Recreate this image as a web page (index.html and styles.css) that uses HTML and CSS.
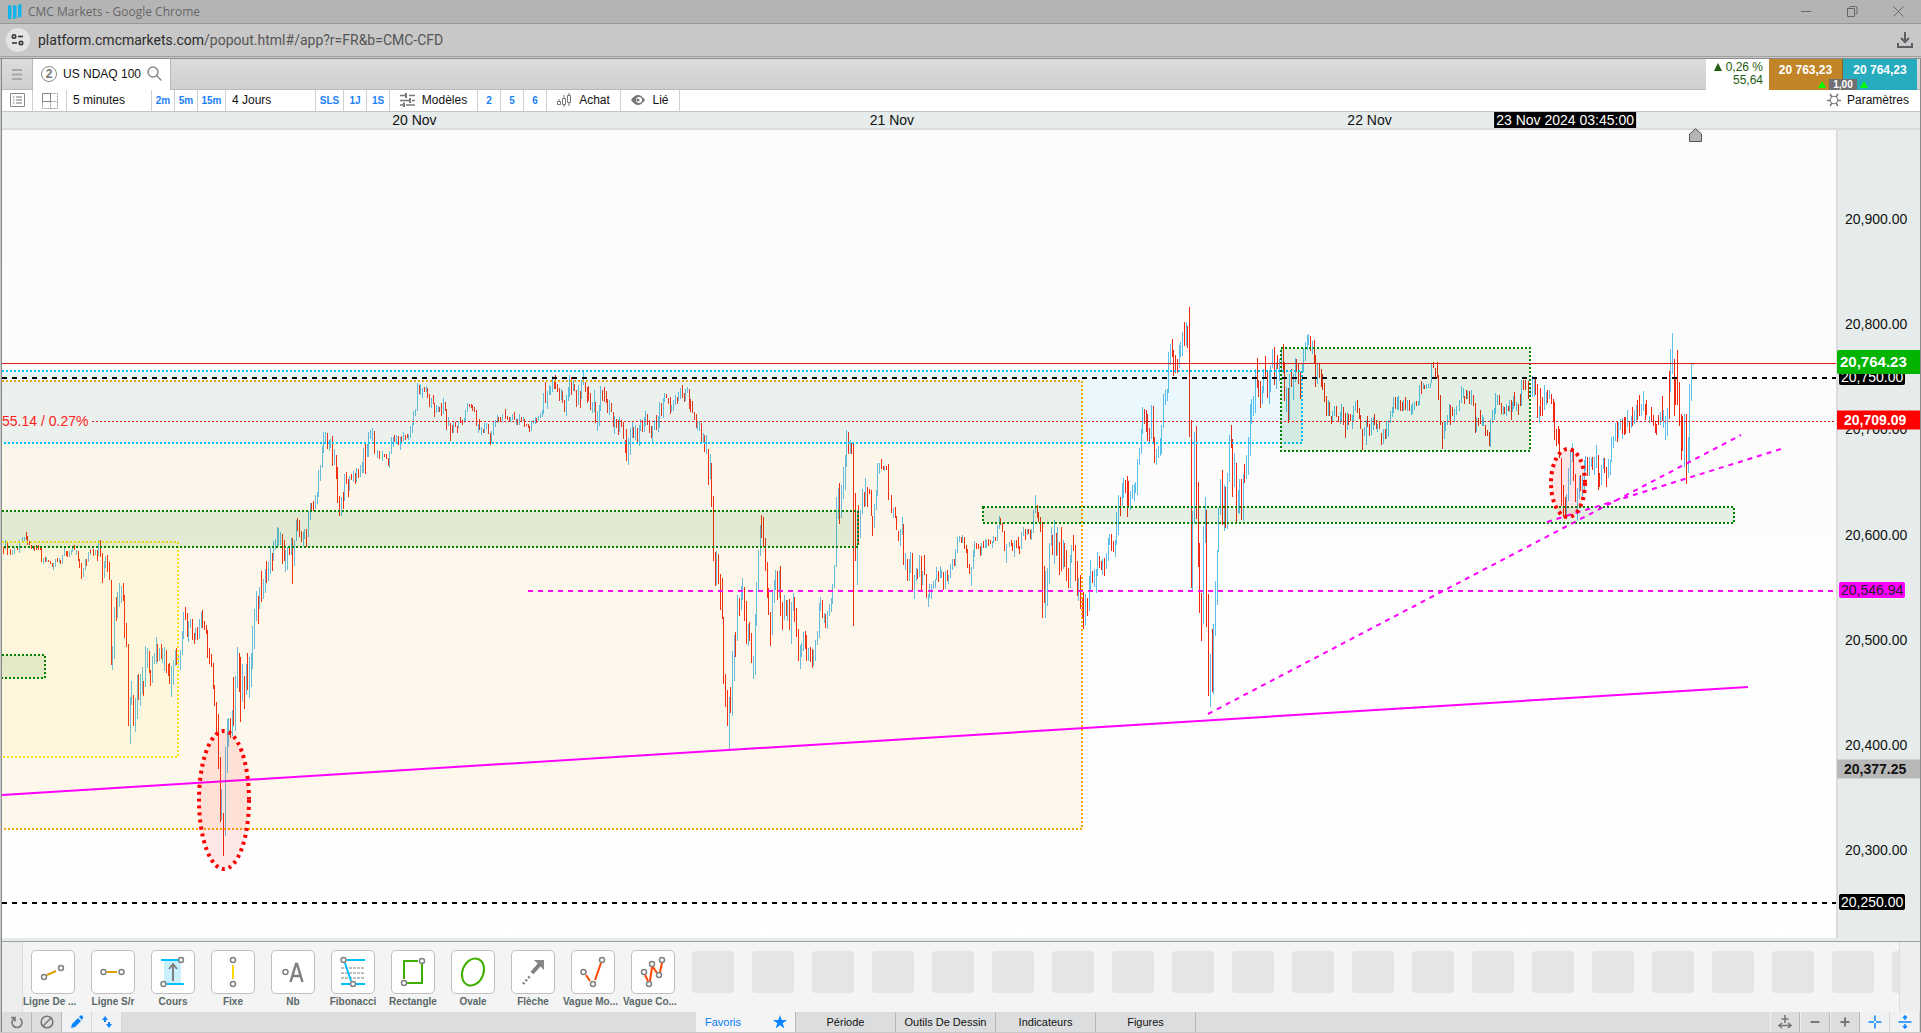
FILE: index.html
```html
<!DOCTYPE html>
<html lang="fr">
  <head>
    <meta charset="utf-8" />
    <title>CMC Markets</title>
    <link rel="stylesheet" href="styles.css">
  </head>

  <body>

    <!-- Browser window -->
    <header class="titlebar">
      <svg class="logo" width="14" height="15" viewBox="0 0 14 15"><path d="M0 1l3.500 .8V15H0zM5 1l3.500 .8V14L5 15zM10 .8L13.500 0v12.500L10 14z" fill="#12b5ea"/></svg>
      <span class="window-title">CMC Markets - Google Chrome</span>
      <button class="window-btn" aria-label="Minimize"><svg width="11" height="11"><path d="M0 5.500h10" stroke="#666" fill="none"/></svg></button>
      <button class="window-btn" aria-label="Restore"><svg width="11" height="11"><path d="M.5 2.500h7v8h-7zM2.500 2.500v-1q0-1 1-1h5q1.500 0 1.500 1.500v5q0 1-1.500 1" stroke="#666" fill="none"/></svg></button>
      <button class="window-btn" aria-label="Close"><svg width="11" height="11"><path d="M.5.5l10 10M10.500.5l-10 10" stroke="#666" fill="none"/></svg></button>
    </header>
    <div class="urlbar">
      <button class="site-info" aria-label="Site information"><svg width="14" height="12" viewBox="0 0 14 12" fill="none" stroke="#333" stroke-width="1.600"><circle cx="3" cy="2.500" r="1.700"/><path d="M7 2.500h5"/><path d="M1 9h5"/><circle cx="10" cy="9" r="1.700"/></svg></button>
      <div class="url">platform.cmcmarkets.com<span>/popout.html#/app?r=FR&amp;b=CMC-CFD</span></div>
      <button class="download" aria-label="Downloads"><svg width="16" height="16" viewBox="0 0 16 16" fill="none" stroke="#5b5e62" stroke-width="2"><path d="M8 0v9M4 6l4 4 4-4M1 11v4h14v-4"/></svg></button>
    </div>

    <main class="app">

      <!-- Instrument tab and prices -->
      <div class="tabs">
        <button class="menu" aria-label="Menu"><svg width="10" height="11"><path d="M0 1h10M0 5.500h10M0 10h10" stroke="#a8a8a8" stroke-width="2"/></svg></button>
        <button class="tab">
          <span class="tab-number">2</span>
          US NDAQ 100
          <svg width="15" height="15" fill="none" stroke="#888" stroke-width="1.500"><circle cx="6" cy="6" r="5"/><path d="M9.500 9.500l5 5"/></svg>
        </button>
        <div class="change">
          <div><svg width="8" height="8"><path d="M4 0l4 8H0z" fill="#1e5c10"/></svg> 0,26 %</div>
          <div>55,64</div>
        </div>
        <div class="prices">
          <button class="sell">20 763,23</button>
          <button class="buy">20 764,23</button>
          <div class="spread">
            <svg width="8" height="7"><path d="M4 0l4 7H0z" fill="#0f0"/></svg>
            <span>1,00</span>
            <svg width="8" height="7"><path d="M4 0l4 7H0z" fill="#0f0"/></svg>
          </div>
        </div>
      </div>

      <!-- Chart toolbar -->
      <div class="toolbar">
        <button class="cell icon-cell" aria-label="Liste"><svg width="15" height="15" fill="none" stroke="#888"><path d="M.5.5h14v13H.5z"/><path d="M3 4h1.500M6 4h6M3 7h1.500M6 7h6M3 10h1.500M6 10h6" stroke="#777"/></svg></button>
        <button class="cell icon-cell wide" aria-label="Disposition"><svg width="16" height="16" fill="none" stroke="#999"><path d="M8.500 .5h7v15H.5v-7M8.500 8.500v7M8.500 8.500h7" stroke-dasharray="2 1"/><path d="M.5.5h8v8h-8z" stroke="#888"/></svg></button>
        <select class="cell period" aria-label="Intervalle"><option>5 minutes</option></select>
        <button class="cell short">2m</button>
        <button class="cell short">5m</button>
        <button class="cell short long">15m</button>
        <select class="cell range" aria-label="Durée"><option>4 Jours</option></select>
        <button class="cell short long">SLS</button>
        <button class="cell short">1J</button>
        <button class="cell short">1S</button>
        <button class="cell models"><svg width="15" height="14" fill="none" stroke="#777"><path d="M0 2.500h6M9 2.500h6M0 7.500h9M12 7.500h3M0 12h3M6 12h9" stroke-width="1.500"/><path d="M6 0v5M10 5v5M4 9.500v4.500" stroke-width="2"/></svg> Modèles</button>
        <button class="cell short">2</button>
        <button class="cell short">5</button>
        <button class="cell short">6</button>
        <button class="cell orders"><svg width="15" height="14" fill="none" stroke="#777"><path d="M.5 8.500h3v3h-3zM5.500 5.500h3v6h-3zM10.500 2.500h3v7h-3zM2 6v2M7 2v3M7 12v2M12 0v2M12 10v3"/></svg> Achat</button>
        <button class="cell linked"><svg width="14" height="10"><path d="M0 5Q7-5 14 5Q7 15 0 5z" fill="#777"/><circle cx="8" cy="5" r="3" fill="#fff"/><circle cx="7" cy="5" r="1.500" fill="#777"/></svg> Lié</button>
        <button class="settings"><svg width="14" height="14" fill="none" stroke="#777"><circle cx="7" cy="7" r="3.800"/><path d="M0 7.500h3M11 7.500h3M3 1l2 3M11 1L9 4M3 13l2-3M11 13l-2-3" stroke-width="1.500"/></svg> Paramètres</button>
      </div>

      <!-- Chart -->
      <div class="time-axis" id="time-axis"></div>
      <div class="chart">
        <div class="plot">
          <svg class="drawing" viewBox="2 130 1834 808" preserveAspectRatio="none">
            <path id="up" class="up"/>
            <path id="down" class="down"/>

            <rect class="zone orange" x="-10" y="381" width="1092" height="448"/>
            <rect class="zone blue" x="-10" y="371" width="1312" height="72"/>
            <rect class="zone yellow" x="-10" y="542" width="188" height="215"/>
            <rect class="zone green" x="-10" y="511" width="868" height="36"/>
            <rect class="zone green" x="-10" y="655" width="55" height="23"/>
            <rect class="zone green" x="983" y="507" width="751" height="16"/>
            <rect class="zone green" x="1281" y="348" width="249" height="103"/>

            <path class="level black" d="M2 378H1836M2 903H1836"/>
            <path class="last" d="M2 363.500H1836"/>
            <path class="previous" d="M92 421.500H1836"/>
            <path class="level magenta" d="M528 591H1836"/>
            <path class="trend" d="M2 795L1748 687"/>
            <path class="trend dashed" d="M1208 714L1741 435M1547 522L1781 449"/>

            <ellipse class="circled" cx="224" cy="800" rx="25" ry="69"/>
            <ellipse class="circled" cx="1568" cy="483" rx="17" ry="34"/>
          </svg>
          <span class="variation">55.14 / 0.27%</span>
          <svg class="marker" width="13" height="14"><path d="M.5 13.500V6L6.500.7 12.500 6v7.500z" fill="#b4b4b4" stroke="#555"/></svg>
        </div>
        <div class="price-axis" id="price-axis"></div>
      </div>

      <!-- Drawing tools -->
      <div class="tools">
        <div class="tools-edge"></div>
        <div class="tools-list">
          <button class="tool"><svg viewBox="1 8 42 42"><path d="M16 32l9-4" class="gold"/><circle cx="13" cy="34" r="2.500"/><circle cx="30" cy="25" r="2.500"/></svg><span class="cut">Ligne De ...</span></button>
          <button class="tool"><svg viewBox="1 8 42 42"><path d="M16 29h10" class="gold"/><circle cx="12.500" cy="29" r="2.500"/><circle cx="30.500" cy="29" r="2.500"/></svg><span>Ligne S/r</span></button>
          <button class="tool"><svg viewBox="1 8 42 42"><path d="M13 17h17v24H13z" fill="#c8f0ff" stroke="none"/><path d="M10 17h17M16 41h17" class="cyan"/><path d="M22 38V22M18 26l4-5 4 5" stroke-width="2"/><circle cx="30" cy="17" r="2.500"/><circle cx="12.500" cy="41" r="2.500"/></svg><span>Cours</span></button>
          <button class="tool"><svg viewBox="1 8 42 42"><path d="M22 22v14" class="yellow-line"/><circle cx="22" cy="17" r="2.500"/><circle cx="22" cy="41" r="2.500"/></svg><span>Fixe</span></button>
          <button class="tool"><svg viewBox="1 8 42 42"><circle cx="14.500" cy="29" r="2.500"/><path d="M19.500 39l5.500-18h1l5.500 18M21 33h9" stroke-width="2.500"/></svg><span>Nb</span></button>
          <button class="tool"><svg viewBox="1 8 42 42"><path d="M10 25h24M10 30h24M10 35h24" stroke-width="1" stroke-dasharray="3 1"/><path d="M16 17h18M10 41h9M25 41h9M14 20l6 18" class="cyan"/><circle cx="12.500" cy="17" r="2.500"/><circle cx="22" cy="41" r="2.500"/></svg><span>Fibonacci</span></button>
          <button class="tool"><svg viewBox="1 8 42 42"><path d="M27 18H13v18M16 40h15V21" class="green-line"/><circle cx="31" cy="18" r="2.500"/><circle cx="13" cy="40" r="2.500"/></svg><span>Rectangle</span></button>
          <button class="tool"><svg viewBox="1 8 42 42"><ellipse cx="22" cy="29" rx="10.500" ry="14" transform="rotate(22 22 29)" class="green-line"/></svg><span>Ovale</span></button>
          <button class="tool"><svg viewBox="1 8 42 42"><path d="M23 17h10v10z" fill="#888" stroke="none"/><path d="M21 30l8-9" stroke-width="4"/><path d="M12 41l8-9" stroke-dasharray="2 2" stroke-width="2.500"/></svg><span>Flèche</span></button>
          <button class="tool"><svg viewBox="1 8 42 42"><path d="M15 32l4 6M24 37l6-17" class="red-line"/><circle cx="12.500" cy="29" r="2.500"/><circle cx="31" cy="17" r="2.500"/><circle cx="22" cy="41" r="2.500"/></svg><span class="cut">Vague Mo...</span></button>
          <button class="tool"><svg viewBox="1 8 42 42"><path d="M14 32l3 6M19 38l2-14M22 24l4 6M29 29l2-9" class="red-line"/><circle cx="13" cy="29" r="2.500"/><circle cx="18" cy="41" r="2.500"/><circle cx="21" cy="21" r="2.500"/><circle cx="28" cy="32" r="2.500"/><circle cx="31" cy="17" r="2.500"/></svg><span class="cut">Vague Co...</span></button>
          <i class="slot"></i><i class="slot"></i><i class="slot"></i><i class="slot"></i><i class="slot"></i><i class="slot"></i><i class="slot"></i>
          <i class="slot"></i><i class="slot"></i><i class="slot"></i><i class="slot"></i><i class="slot"></i><i class="slot"></i><i class="slot"></i>
          <i class="slot"></i><i class="slot"></i><i class="slot"></i><i class="slot"></i><i class="slot"></i><i class="slot"></i><i class="slot"></i>
        </div>
        <div class="tools-edge"></div>
      </div>

      <footer class="bottombar">
        <div class="bottom-group">
          <button aria-label="Réinitialiser"><svg width="14" height="14" fill="none" stroke="#777" stroke-width="1.600"><path d="M4 3.500a5 5 0 1 0 6 0M1 2.500h4v4"/></svg></button>
          <button aria-label="Effacer"><svg width="14" height="14" fill="none" stroke="#777" stroke-width="1.600"><circle cx="7" cy="7" r="5.800"/><path d="M3 11l8-8"/></svg></button>
          <button class="on" aria-label="Dessiner"><svg width="14" height="14"><path d="M1 13l1-4 6-6 3 3-6 6zM9 2l1.500-1.500q1-.5 2 .5t.5 2L12 5z" fill="#0a84ff"/></svg></button>
          <button class="on" aria-label="Ordres"><svg width="14" height="14"><path d="M2 5l3-4 3 4zM4 5h2v2H4zM6 9l3 4 3-4zM8 7h2v2H8z" fill="#0a84ff"/></svg></button>
        </div>
        <nav class="bottom-tabs">
          <button class="on">Favoris <svg width="14" height="14"><path d="M7 0l1.700 5H14l-4.300 3.200L11.400 13.500 7 10.300 2.600 13.500 4.300 8.200 0 5h5.300z" fill="#0a84ff"/></svg></button>
          <button>Période</button>
          <button>Outils De Dessin</button>
          <button>Indicateurs</button>
          <button>Figures</button>
        </nav>
        <div class="bottom-group right">
          <button aria-label="Ajuster"><svg width="14" height="14" fill="none" stroke="#777" stroke-width="1.600"><path d="M7 0v8M3.500 4h7M1 10.500h12M4 8l-3 2.500L4 13M10 8l3 2.500-3 2.500"/></svg></button>
          <button aria-label="Zoom arrière"><svg width="14" height="14"><path d="M2.500 7h9" stroke="#777" stroke-width="2"/></svg></button>
          <button aria-label="Zoom avant"><svg width="14" height="14"><path d="M2.500 7h9M7 2.500v9" stroke="#777" stroke-width="2"/></svg></button>
          <button class="on" aria-label="Réticule"><svg width="14" height="14"><path d="M.5 7H6M8 7h5.500M7 .5V6M7 8v5.500" stroke="#0a84ff" stroke-width="1.500"/></svg></button>
          <button class="on" aria-label="Centrer"><svg width="14" height="14" fill="none" stroke="#0a84ff" stroke-width="1.500"><path d="M.5 7h13M7 .5V5M7 9v4.500M5 3l2-2 2 2M5 11l2 2 2-2"/></svg></button>
        </div>
      </footer>
    </main>

    <script src="chart.js"></script>
  </body>
</html>
```
FILE: styles.css
```css
* {
  box-sizing: border-box;
}

body {
  margin: 0;
  height: 100vh;
  display: flex;
  flex-direction: column;
  overflow: hidden;
  background: #c8c8c8;
  color: #111;
  font-family: "Liberation Sans", Arial, sans-serif;
  font-size: 12px;
}

button, select {
  margin: 0;
  padding: 0;
  border: none;
  border-radius: 0;
  background: none;
  color: inherit;
  font: inherit;
  cursor: pointer;
}

select {
  appearance: none;
}

svg {
  flex: none;
}

/* Browser window */
.titlebar {
  display: flex;
  align-items: center;
  height: 24px;
  padding: 0 8px;
  background: #b4b4b4;
  border-bottom: 1px solid #989898;
  color: #666;
  font-family: "Open Sans", "Noto Sans", sans-serif;
}

.window-title {
  flex: 1;
  margin-left: 6px;
}

.window-btn {
  display: flex;
  justify-content: center;
  width: 46px;
}

.window-btn:last-child {
  width: 30px;
  margin-left: 8px;
}

.urlbar {
  display: flex;
  align-items: center;
  height: 35px;
  padding: 0 8px 2px 6px;
  border-bottom: 1px solid #8c8c8c;
  box-shadow: inset 0 -1px #c8c8c8, inset 0 -2px #a0a0a0;
  color: #2c2c2c;
  font-family: Roboto, "Noto Sans", sans-serif;
  font-size: 14px;
}

.site-info {
  display: flex;
  align-items: center;
  justify-content: center;
  width: 24px;
  height: 24px;
  border-radius: 50%;
  background: #e4e4e4;
}

.url {
  flex: 1;
  margin-left: 8px;
}

.url span {
  color: #555;
}

.download {
  display: flex;
}

.app {
  flex: 1;
  min-height: 0;
  display: flex;
  flex-direction: column;
  margin: 0 0 1px 1px;
  border-left: 1px solid #8a8a8a;
  border-right: 1px solid #8a8a8a;
  background: #fff;
}

/* Instrument tab */
.tabs {
  display: flex;
  height: 31px;
  padding-right: 3px;
  background: linear-gradient(#dcdcdc, #cfcfcf);
  box-shadow: inset 0 -1px #b8b8b8;
}

.menu {
  display: flex;
  align-items: center;
  justify-content: center;
  width: 31px;
  border-right: 1px solid #b8b8b8;
}

.tab {
  display: flex;
  align-items: center;
  gap: 6px;
  padding: 0 8px 2px;
  background: #fff;
  border-right: 1px solid #b8b8b8;
}

.tab-number {
  width: 16px;
  height: 16px;
  border: 1px solid #888;
  border-radius: 50%;
  color: #777;
  font-weight: bold;
  line-height: 14px;
}

.change {
  margin-left: auto;
  padding: 2px 6px 0 8px;
  background: #fff;
  color: #1e5c10;
  line-height: 13px;
  text-align: right;
}

.prices {
  position: relative;
  display: flex;
  color: #fff;
}

.sell, .buy {
  width: 74px;
  padding-bottom: 10px;
  font-weight: bold;
}

.sell {
  background: #c18528;
  border-right: 1px solid #8c6320;
}

.buy {
  background: #26abbf;
}

.spread {
  position: absolute;
  right: 0;
  bottom: 0;
  left: 0;
  display: flex;
  align-items: center;
  justify-content: center;
  gap: 3px;
  font-size: 10px;
  font-weight: bold;
  line-height: 11px;
}

.spread span {
  padding: 0 4px;
  background: #707070;
}

/* Toolbar */
.toolbar {
  display: flex;
  height: 22px;
  background: #fff;
  border-bottom: 1px solid #c4c4c4;
}

.cell {
  display: flex;
  align-items: center;
  justify-content: center;
  gap: 7px;
  padding-bottom: 2px;
  border-right: 1px solid #d0d0d0;
}

.icon-cell {
  width: 31px;
  padding-bottom: 0;
}

.wide {
  width: 34px;
}

.period {
  width: 85px;
  padding-left: 6px;
}

.range {
  width: 90px;
  padding-left: 6px;
}

.short {
  width: 23px;
  padding-bottom: 0;
  color: #1a80f5;
  font-size: 10px;
  font-weight: bold;
}

.long {
  width: 28px;
}

.models {
  width: 88px;
}

.orders {
  width: 74px;
}

.linked {
  width: 59px;
}

.settings {
  display: flex;
  align-items: center;
  gap: 6px;
  margin-left: auto;
  padding: 0 11px 2px 0;
}

/* Time and price labels */
.time-axis {
  position: relative;
  height: 18px;
  background: #e6ecec;
  border-bottom: 2px solid #dcdcdc;
  font-size: 14px;
  line-height: 16px;
}

.time-axis span {
  position: absolute;
  top: 0;
  transform: translateX(-50%);
  white-space: nowrap;
}

.time-axis .cursor {
  padding: 0 2px;
  background: #000;
  color: #fff;
}

.chart {
  flex: 1;
  min-height: 0;
  display: flex;
  padding-bottom: 3px;
  background: #e6ecec;
  border-bottom: 1px solid #98a0a0;
}

.plot {
  position: relative;
  flex: 1;
  min-width: 0;
  background: linear-gradient(#fbfbfb, #fff);
}

.price-axis {
  position: relative;
  width: 84px;
  border-left: 2px solid #dcdcdc;
  font-size: 14px;
}

.price-axis span {
  position: absolute;
  left: 0;
  padding-left: 7px;
  line-height: 16px;
  transform: translateY(-50%);
}

.price-axis .tag {
  left: 1px;
  padding: 0 2px;
  border-radius: 2px;
  background: #000;
  color: #fff;
}

.price-axis .tag.pink {
  background: #f0f;
  color: #222;
}

.price-axis .full {
  left: -1px;
  right: 0;
  font-weight: bold;
  line-height: 19px;
}

.price-axis .current {
  padding-left: 3px;
  border-radius: 2px 0 0 2px;
  background: #00b400;
  color: #fff;
  font-size: 15px;
  line-height: 24px;
}

.price-axis .close {
  background: #f00;
  color: #fff;
}

.price-axis .pointer {
  background: #b8b8b8;
}

.variation {
  position: absolute;
  top: 35%;
  left: 0;
  color: #f22;
  font-size: 14px;
}

.marker {
  position: absolute;
  top: -2px;
  left: 92%;
}

/* Chart drawing */
.drawing {
  display: block;
  position: absolute;
  width: 100%;
  height: 100%;
  fill: none;
}

.up {
  stroke: #5cc0ea;
  shape-rendering: crispEdges;
}

.down {
  stroke: #f02810;
  shape-rendering: crispEdges;
}

.zone {
  fill-opacity: 0.07;
  stroke-width: 2;
  stroke-dasharray: 2 2;
}

.orange {
  fill: #ff9800;
  stroke: #ffa500;
}

.blue {
  fill: #00bfff;
  stroke: #00bfff;
}

.yellow {
  fill: #ffec1a;
  stroke: #ffe31a;
}

.green {
  fill: #008000;
  fill-opacity: 0.1;
  stroke: #008000;
}

.level {
  stroke-width: 2;
  stroke-dasharray: 5 5;
}

.black {
  stroke: #000;
}

.magenta {
  stroke: #f0f;
}

.last {
  stroke: #e01818;
}

.previous {
  stroke: #e01010;
  stroke-dasharray: 2 2;
}

.trend {
  stroke: #f0f;
  stroke-width: 2;
}

.dashed {
  stroke-dasharray: 5 5;
}

.circled {
  fill: #f00;
  fill-opacity: 0.09;
  stroke: #f00;
  stroke-width: 4;
  stroke-dasharray: 3 4;
}

/* Drawing tools */
.tools {
  display: flex;
  height: 70px;
  background: #f4f4f4;
}

.tools-edge {
  width: 20px;
  background: #eee;
}

.tools-list {
  flex: 1;
  min-width: 0;
  display: flex;
  overflow: hidden;
  border: 1px solid #dcdcdc;
  border-width: 0 1px;
}

.tool {
  flex: none;
  display: flex;
  flex-direction: column;
  align-items: center;
  gap: 2px;
  width: 60px;
  padding-top: 8px;
  color: #5a6868;
  font-size: 10px;
  font-weight: bold;
  white-space: nowrap;
}

.tool svg {
  width: 44px;
  height: 44px;
  border: 1px solid #c0c0c0;
  border-radius: 5px;
  background: #fff;
  fill: none;
  stroke: #808080;
  stroke-width: 1.5;
}

.tool .cut {
  align-self: flex-start;
}

.tool .gold {
  stroke: #dca000;
  stroke-width: 2;
}

.tool .yellow-line {
  stroke: #ffd700;
  stroke-width: 2;
}

.tool .cyan {
  stroke: #00bfff;
  stroke-width: 2;
}

.tool .green-line {
  stroke: #40b000;
  stroke-width: 2;
}

.tool .red-line {
  stroke: #ff4500;
  stroke-width: 2;
}

.slot {
  flex: none;
  width: 42px;
  height: 42px;
  margin: 9px 9px 0;
  border-radius: 4px;
  background: #e5e5e5;
}

/* Bottom bar */
.bottombar {
  display: flex;
  justify-content: space-between;
  height: 20px;
  background: #dcddde;
  font-size: 11px;
}

.bottom-group, .bottom-tabs {
  display: flex;
}

.bottom-group button {
  display: flex;
  align-items: center;
  justify-content: center;
  width: 30px;
  border-right: 1px solid #b8b8b8;
}

.bottom-group.right button {
  border-left: 1px solid #f0f0f0;
}

.bottom-group .on {
  background: #f0f1f2;
  border-right-color: #d8d8d8;
}

.bottom-tabs button {
  width: 100px;
  border-right: 1px solid #b8b8b8;
}

.bottom-tabs .on {
  display: flex;
  align-items: center;
  justify-content: space-between;
  padding: 0 8px 0 9px;
  background: #f4f4f4;
  color: #0a7cf5;
}
```
FILE: chart.js
```js
// Bars of the 5 minute chart: "x high low"
const up = `
5 540 550,12 550 555,14 547 554,19 540 553,22 537 541,24 537 541,33 547 550,43 558 564,46 557 562,53 563 570,55 559 567,59 558 563,62 555 564,64 547 556,69 551 557,71 550 555,72 546 552,76 550 555,83 568 577,85 559 570,88 552 562,90 549 555,95 550 555,98 540 556,104 561 578,105 556 568,112 646 670,114 607 659,117 592 618,119 583 607,121 586 603,130 697 744,131 681 705,135 698 732,137 675 719,140 674 706,142 667 694,145 646 687,147 648 668,152 656 683,154 653 664,156 637 664,159 648 661,162 648 663,164 647 671,171 666 697,173 660 685,175 650 666,178 656 665,180 650 670,182 631 655,183 612 639,188 621 642,190 619 628,195 628 640,199 619 639,201 612 628,
221 789 820,225 747 836,227 719 773,228 718 747,232 710 736,235 676 731,237 647 688,242 664 702,246 664 695,249 657 698,251 653 687,252 626 669,254 609 649,256 591 621,259 587 609,263 579 599,265 569 593,268 562 581,270 547 574,273 541 561,275 539 550,277 527 546,278 528 546,280 532 545,285 550 572,287 547 570,291 538 555,294 540 566,296 520 541,303 532 546,304 529 539,308 511 537,310 503 520,315 495 509,317 492 504,318 470 497,320 465 481,322 446 468,323 432 453,325 432 443,329 440 451,330 439 448,334 449 465,341 497 516,344 474 501,349 476 491,353 471 482,356 468 482,360 465 477,362 462 473,363 448 473,367 444 457,368 432 457,370 430 439,372 428 441,377 450 458,382 451 461,389 451 468,391 437 454,393 437 447,396 435 443,400 437 450,
403 432 441,408 434 440,410 426 438,412 423 433,413 411 425,415 409 416,417 383 411,420 384 395,422 388 398,426 386 392,431 398 408,436 405 413,438 406 412,443 398 414,448 417 426,453 422 433,458 421 428,464 418 423,465 410 421,467 403 412,478 424 433,481 427 435,484 423 433,486 423 429,491 431 443,493 421 435,495 420 427,497 415 423,502 414 421,510 417 422,512 414 420,516 418 425,519 414 425,523 417 421,531 421 431,533 420 424,535 417 424,538 416 421,540 413 418,542 410 417,543 393 414,547 391 409,549 385 395,550 386 395,552 376 392,561 389 400,566 395 416,568 387 401,569 375 397,573 380 391,578 385 405,581 380 399,583 371 385,592 402 413,594 390 412,597 411 431,599 405 426,600 386 411,609 400 415,614 416 434,619 417 432,628 438 465,630 428 455,632 422 438,635 425 440,639 425 446,640 419 431,644 417 432,645 411 426,652 426 443,654 420 430,658 416 432,659 402 428,663 398 418,664 393 402,671 405 412,673 400 411,675 395 405,678 392 401,680 388 399,685 389 401,687 387 393,697 421 430,699 421 431,703 433 443,706 435 454,710 454 479,716 551 585,729 697 749,732 651 716,734 635 681,737 595 641,741 586 610,742 578 600,748 624 646,753 656 679,755 614 675,756 582 626,758 550 590,760 525 556,772 591 635,774 580 603,775 570 590,779 570 598,784 595 620,787 600 621,791 602 644,793 593 611,
800 645 669,801 643 657,803 632 651,808 648 661,813 650 666,815 640 661,817 631 645,819 603 638,820 597 611,824 613 623,827 611 629,829 604 616,831 598 612,832 584 604,834 565 588,836 497 567,838 488 519,841 485 518,843 467 499,845 455 490,846 430 467,850 440 454,857 510 585,860 510 538,862 489 514,865 478 506,874 504 528,876 490 510,877 463 496,879 463 474,884 466 471,891 495 511,893 508 518,900 529 546,902 517 535,905 553 570,909 559 581,910 552 573,914 575 599,916 568 581,919 555 577,922 571 585,928 594 607,929 584 598,931 584 599,933 581 589,935 579 588,936 567 580,940 566 578,941 570 578,945 571 589,948 575 584,950 564 578,952 559 570,955 549 566,957 537 553,959 536 542,962 535 543,971 567 586,973 550 569,974 541 557,981 543 555,985 539 548,986 540 548,992 541 548,993 536 543,997 525 541,999 516 529,1006 544 563,1009 542 547,1014 540 557,1016 540 548,1021 532 549,1023 527 536,1027 529 535,1031 529 540,1033 510 533,1035 495 513,1045 571 618,1047 568 606,1049 543 584,1051 527 546,1054 520 564,1057 527 555,1063 540 569,1070 555 588,1071 545 563,1078 578 601,
1085 594 626,1089 576 611,1090 560 590,1094 569 587,1096 569 593,1097 552 576,1102 559 575,1106 553 569,1108 538 561,1109 534 545,1115 540 557,1116 512 545,1118 495 535,1122 483 506,1123 478 498,1130 491 510,1132 485 499,1134 484 501,1135 482 493,1137 459 495,1139 448 465,1141 429 454,1142 407 434,1151 405 439,1156 449 465,1158 446 458,1160 438 456,1161 425 454,1163 394 428,1165 390 405,1167 389 401,1168 352 393,1170 344 365,1179 345 368,1180 342 357,1182 332 356,1186 322 346,1192 511 590,1194 432 523,1203 526 624,1205 497 543,1210 654 707,1213 624 694,1215 581 636,1217 550 605,1218 508 552,1220 479 515,1224 485 531,1227 473 529,1229 435 482,1234 453 487,1238 490 513,1239 479 514,1243 474 521,1246 455 479,1248 437 475,1250 404 456,1251 399 424,1253 396 416,1255 369 413,1262 386 404,1263 369 393,1269 370 404,1270 365 392,1272 349 368,1276 362 389,1279 359 381,1281 348 370,1286 387 412,1289 374 420,1293 374 400,1295 358 382,1302 363 372,1303 348 372,1305 342 361,1307 335 350,1308 334 345,1312 341 354,1317 364 384,1319 364 378,
1328 400 416,1332 411 422,1334 406 416,1340 412 424,1341 404 422,1347 412 430,1352 415 429,1353 406 421,1355 401 411,1364 427 436,1366 420 445,1371 418 435,1373 417 430,1377 424 432,1383 429 444,1386 421 439,1388 420 437,1390 411 423,1392 407 417,1393 397 413,1397 397 410,1398 396 410,1403 400 411,1407 400 411,1411 405 415,1412 403 414,1414 402 410,1418 401 406,1419 385 405,1423 383 389,1426 384 389,1428 384 388,1430 383 388,1431 364 383,1444 422 439,1445 421 431,1447 415 425,1449 404 420,1454 409 422,1456 406 415,1459 400 411,1461 386 403,1463 388 398,1467 391 399,1471 390 405,1476 417 432,1482 415 426,1483 417 426,1490 419 447,1492 410 423,1494 408 420,1495 393 414,1497 395 405,1503 406 415,1506 404 416,1509 400 412,1512 402 412,1513 396 409,1516 402 411,1521 380 406,1530 388 397,1532 376 397,1534 377 397,1539 406 423,1544 385 410,1546 392 405,1549 390 399,1566 494 517,1568 468 501,1570 450 485,1572 443 462,1577 488 521,1579 476 499,1582 476 496,1584 460 491,1585 456 471,1589 457 476,1591 458 467,1594 457 475,1596 445 468,1601 465 485,1603 458 469,1608 459 478,1610 460 475,1611 437 462,1613 436 448,1615 423 441,1618 422 438,1620 419 430,1622 418 439,1627 410 427,1631 416 428,1634 410 424,1636 405 422,1641 404 416,1643 391 411,1649 416 423,1660 412 425,1663 410 428,1665 416 440,1667 408 436,1670 349 392,1672 333 374,1684 414 467,1688 437 473,1689 384 462,1691 363 401,1693 364 365`;

const down = `
3 547 554,7 542 555,10 549 555,17 547 550,26 532 540,27 536 545,29 541 545,31 545 549,34 546 551,36 545 550,38 545 550,40 546 550,41 546 562,45 557 562,48 560 562,50 561 564,52 563 567,57 558 562,60 560 564,66 551 556,67 551 557,74 545 550,78 551 561,79 559 568,81 563 579,86 559 566,90 550 553,93 549 556,97 550 561,100 540 557,102 553 583,107 555 572,109 562 580,111 580 665,116 597 621,123 583 601,124 595 638,126 623 647,128 644 726,133 695 726,138 674 700,143 681 696,149 651 673,150 670 686,157 644 662,161 644 659,166 650 673,168 664 676,169 663 684,176 648 665,185 607 620,187 613 637,192 619 640,194 633 644,197 627 640,202 610 628,204 621 630,206 625 634,207 630 658,209 648 664,211 654 667,213 663 689,214 685 706,216 702 733,218 714 769,220 757 822,223 813 856,230 718 738,233 677 726,239 653 692,240 657 722,244 676 709,247 653 690,258 596 624,261 571 602,266 561 583,272 553 571,282 534 564,284 540 561,289 547 555,292 538 584,297 518 531,299 520 537,301 531 542,306 529 547,311 503 511,313 501 511,327 433 449,332 436 466,336 455 479,337 467 503,339 496 516,343 492 509,346 472 484,348 479 497,351 474 480,355 473 484,358 469 478,365 442 474,374 431 454,379 451 459,384 454 457,386 454 459,388 458 466,394 435 442,398 436 445,
401 436 442,405 435 440,407 434 438,419 385 394,424 387 392,427 388 398,429 394 407,433 395 404,434 403 417,439 407 412,441 403 416,445 402 411,446 409 430,450 423 441,452 425 433,455 422 427,457 426 433,460 417 423,462 420 425,469 404 407,471 404 408,472 405 411,474 407 412,476 410 426,479 419 430,483 429 433,488 424 434,490 433 445,498 417 422,500 417 421,505 409 419,507 416 420,509 417 422,514 412 420,517 419 425,521 417 421,524 419 427,526 424 426,528 424 428,529 426 432,536 418 423,545 382 403,554 381 389,555 375 389,557 384 392,559 388 401,562 391 403,564 400 412,571 377 395,574 384 391,576 390 407,580 391 408,585 382 392,587 387 403,588 386 401,590 393 410,595 402 423,602 390 401,604 387 402,606 391 403,607 399 413,611 403 412,613 412 427,616 419 428,618 420 435,621 420 427,623 422 439,625 440 453,626 429 461,633 427 438,637 428 443,642 420 432,647 414 425,649 420 433,651 426 438,656 415 430,661 403 416,666 394 398,668 398 404,670 397 414,677 397 404,682 385 398,684 393 402,689 389 409,690 399 412,692 401 413,694 412 420,696 414 428,701 423 443,704 435 452,708 449 485,711 463 507,713 496 561,715 552 586,718 554 584,720 574 610,722 578 619,723 617 684,725 674 707,727 690 726,730 687 713,735 632 657,739 598 616,744 587 621,746 601 644,749 622 641,751 633 663,761 515 538,763 517 547,765 538 571,767 562 598,768 588 615,770 612 646,777 571 600,780 566 616,782 602 630,786 600 616,789 599 630,794 597 622,796 608 637,798 629 661,
805 631 649,806 635 661,810 647 662,812 649 668,822 600 618,825 614 628,839 483 524,848 432 454,851 443 454,853 444 626,855 493 561,858 505 545,864 492 507,867 487 507,869 489 494,871 490 516,872 516 536,881 459 469,883 466 470,886 466 470,888 464 500,891 495 513,895 507 518,896 516 530,898 531 541,903 524 565,907 559 581,912 553 590,917 569 579,921 556 590,924 555 575,926 574 598,938 571 582,943 572 590,947 570 581,954 559 566,961 537 543,964 537 549,966 545 553,967 549 568,969 564 574,976 543 549,978 544 549,980 546 556,983 541 548,988 539 546,990 540 544,995 537 541,1000 518 525,1002 523 532,1004 531 551,1011 540 546,1012 543 551,1016 540 548,1018 537 549,1019 546 554,1025 529 540,1028 529 534,1030 530 539,1037 505 518,1038 512 522,1040 517 532,1042 522 618,1044 566 603,1052 535 555,1056 533 556,1059 542 575,1061 527 571,1064 543 567,1066 550 581,1068 568 588,1073 535 551,1075 545 581,1077 561 596,1080 575 609,1082 598 618,1083 592 629,1087 598 616,1092 571 583,1099 556 568,1101 561 570,1104 558 576,1111 534 551,1113 541 552,1120 497 516,1125 480 493,1127 476 517,1128 481 507,1144 409 424,1146 410 432,1147 414 441,1149 428 444,1153 406 444,1154 437 463,1172 339 357,1173 350 376,1175 355 373,1177 359 373,1184 322 346,1187 326 348,1189 307 437,1191 420 588,1196 426 519,1198 482 567,1199 543 613,
1201 593 641,1206 510 627,1208 594 696,1212 629 692,1222 470 525,1225 487 528,1231 425 448,1232 439 497,1236 463 523,1241 479 520,1244 464 483,1257 358 388,1258 380 397,1260 381 408,1265 356 379,1267 372 398,1274 347 385,1277 355 369,1283 344 373,1284 362 401,1288 388 423,1291 369 387,1296 359 372,1298 364 384,1300 372 399,1310 336 351,1314 340 363,1315 355 387,1319 364 378,1321 369 387,1322 374 390,1324 383 402,1326 396 416,1329 402 416,1331 416 424,1336 406 417,1338 416 422,1343 407 425,1345 413 438,1348 414 425,1350 414 421,1357 400 413,1359 408 419,1360 415 429,1362 429 450,1367 416 427,1369 424 436,1374 414 425,1376 420 429,1379 421 429,1381 433 445,1385 429 439,1395 397 409,1400 400 411,1402 402 411,1405 397 410,1409 400 411,1416 401 406,1421 381 394,1424 385 389,1433 362 368,1435 368 378,1437 362 378,1438 375 400,1440 395 425,1442 422 449,1450 405 425,1452 407 416,1464 396 404,1466 390 399,1469 391 404,1473 395 406,1475 403 433,1478 418 426,1480 410 424,1485 425 436,1487 430 436,1489 432 446,1499 395 405,1501 403 414,1504 407 414,1508 406 411,1511 400 420,1514 392 406,1518 404 415,1520 394 406,1523 380 390,1525 380 390,1528 381 399,1535 378 395,1537 384 418,1540 388 416,1542 397 416,1547 390 403,1551 394 404,1553 399 422,1554 402 440,1556 429 446,1558 426 444,1559 429 458,1561 458 506,1563 485 517,1565 497 517,1573 450 481,1575 474 502,1580 475 491,1587 457 476,1592 457 470,1598 455 490,1599 473 487,1604 458 473,1606 467 487,1617 422 442,1622 420 434,1624 417 435,1625 417 434,1629 422 433,1632 407 426,1637 400 420,1639 395 416,1645 404 420,1646 400 415,1651 407 422,1653 415 426,1655 421 433,1656 424 435,1658 415 425,1662 396 421,1669 371 419,1674 359 416,1675 378 405,1677 350 405,1679 382 426,1681 414 460,1682 416 451,1686 414 484`;

const toPath = (bars) => bars.trim().split(",").map((bar) => {
  const [x, high, low] = bar.trim().split(" ");
  return `M${x}.5 ${high}V${low}`;
}).join("");

document.querySelector("#up").setAttribute("d", toPath(up));
document.querySelector("#down").setAttribute("d", toPath(down));

// Price scale
const TOP_PRICE = 20985;
const BOTTOM_PRICE = 20216;

const prices = [
  [20900, ""],
  [20800, ""],
  [20700, ""],
  [20600, ""],
  [20500, ""],
  [20400, ""],
  [20300, ""],
  [20750, "tag"],
  [20250, "tag"],
  [20546.94, "tag pink"],
  [20377.25, "full pointer"],
  [20709.09, "full close"],
  [20764.23, "full current"],
];

const priceAxis = document.querySelector("#price-axis");
prices.forEach(([price, className]) => {
  const label = document.createElement("span");
  label.className = className;
  label.textContent = price.toLocaleString("en-US", { minimumFractionDigits: 2 });
  label.style.top = `${(TOP_PRICE - price) / (TOP_PRICE - BOTTOM_PRICE) * 100}%`;
  priceAxis.appendChild(label);
});

// Time scale, positions in % of the axis width
const times = [
  ["20 Nov", 21.5, ""],
  ["21 Nov", 46.4, ""],
  ["22 Nov", 71.3, ""],
  ["23 Nov 2024 03:45:00", 81.5, "cursor"],
];

const timeAxis = document.querySelector("#time-axis");
times.forEach(([text, left, className]) => {
  const label = document.createElement("span");
  label.className = className;
  label.textContent = text;
  label.style.left = `${left}%`;
  timeAxis.appendChild(label);
});
```
